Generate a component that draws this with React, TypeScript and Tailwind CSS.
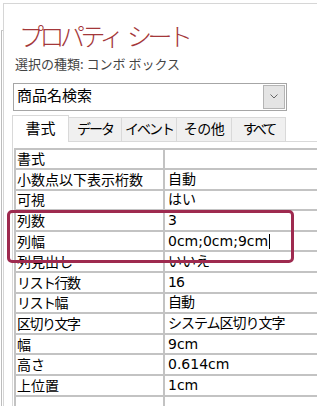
import React from "react";

const rows = [
  { label: "書式", value: "" },
  { label: "小数点以下表示桁数", value: "自動" },
  { label: "可視", value: "はい" },
  { label: "列数", value: "3" },
  { label: "列幅", value: "0cm;0cm;9cm", cursor: true },
  { label: "列見出し", value: "いいえ" },
  { label: "リスト行数", value: "16", tight: true },
  { label: "リスト幅", value: "自動", tight: true },
  { label: "区切り文字", value: "システム区切り文字", tight: true },
  { label: "幅", value: "9cm" },
  { label: "高さ", value: "0.614cm" },
  { label: "上位置", value: "1cm" },
  { label: "", value: "" },
];

const tabs = [
  { name: "データ", w: "w-[53px]", tr: "tracking-[-2px]" },
  { name: "イベント", w: "w-[55px]", tr: "tracking-[-2px]" },
  { name: "その他", w: "w-[55px]", tr: "tracking-[-0.5px]" },
  { name: "すべて", w: "w-[54px]", tr: "tracking-[-3px]" },
];

export default function App() {
  return (
    <div className="relative w-[317px] h-[406px] overflow-hidden bg-white flex font-['Noto_Sans_CJK_JP',sans-serif]">
      {/* window frame at left */}
      <div className="w-[3px] shrink-0 flex flex-col pl-[1px]">
        <div className="h-[31px] border-b border-[#c8c8c8]" />
        <div className="flex-1 border-l border-[#bdbdbd]" />
      </div>

      <div className="flex-1 mt-[3px] border-t border-l border-[#d6d6d6] flex flex-col pl-[8px]">
        <h1 className="mt-[18px] ml-[7px] h-[26px] leading-[26px] text-[25px] tracking-[-4.5px] font-light text-[#a4373a] whitespace-nowrap">
          プロパティ<span className="ml-[7px]">シート</span>
        </h1>
        <div className="mt-[8px] ml-[3px] h-[16px] leading-[16px] text-[13px] text-[#444] whitespace-nowrap">
          選択の種類: コンボ ボックス
        </div>

        {/* object selector */}
        <div className="mt-[11px] ml-[1px] w-[274px] h-[31px] border border-[#a6a6a6] flex items-stretch">
          <div className="flex-1 pl-[3px] pb-[3px] flex items-center text-[15px] text-black">
            商品名検索
          </div>
          <div className="w-[22px] my-[1px] mr-[1px] border border-[#b4b4b4] bg-[#e4e4e4] flex items-center justify-center">
            <svg width="8" height="5" viewBox="0 0 8 5">
              <path d="M0.5 0.5 L4 4 L7.5 0.5" fill="none" stroke="#666" strokeWidth="1" />
            </svg>
          </div>
        </div>

        {/* tabs */}
        <div className="mt-[4px] flex items-end h-[26px]">
          <div className="relative z-10 -mb-px w-[57px] h-[27px] border-l border-t border-r border-[#d9d9d9] bg-white flex justify-center pt-[1px] text-[15px] text-black">
            書式
          </div>
          {tabs.map((t) => (
            <div
              key={t.name}
              className={`${t.w} h-[24px] border-t border-r border-[#d9d9d9] bg-[#f0f0f0] flex justify-center items-center pb-[1px] text-[14px] text-black ${t.tr}`}
            >
              {t.name}
            </div>
          ))}
        </div>

        {/* property grid */}
        <div className="flex-1 border-t border-l border-[#d9d9d9] pt-[6px] pl-[1px]">
          <div className="w-[400px] border-t-2 border-l-2 border-[#c3c3c3]">
            {rows.map((r, i) => (
              <div key={i} className="h-[20.6px] flex border-b-2 border-[#c3c3c3] text-black">
                <div
                  className={`w-[149px] shrink-0 border-r-2 border-[#c3c3c3] pl-[1px] flex items-center text-[14px] whitespace-nowrap ${
                    r.tight ? "tracking-[-1.5px]" : ""
                  }`}
                >
                  {r.label}
                </div>
                <div
                  className={`flex-1 pl-[3px] flex items-center text-[14px] whitespace-nowrap font-['DejaVu_Sans','Noto_Sans_CJK_JP',sans-serif] ${
                    r.tight ? "tracking-[-1px]" : ""
                  }`}
                >
                  {r.value}
                  {r.cursor && <span className="ml-[1px] w-px h-[15px] bg-black" />}
                </div>
              </div>
            ))}
          </div>
        </div>
      </div>

      {/* highlight around 列数 / 列幅 */}
      <div className="absolute left-[7px] top-[210px] w-[287px] h-[53px] rounded-[5px] border-[3px] border-[#9e2a4f]" />
    </div>
  );
}
